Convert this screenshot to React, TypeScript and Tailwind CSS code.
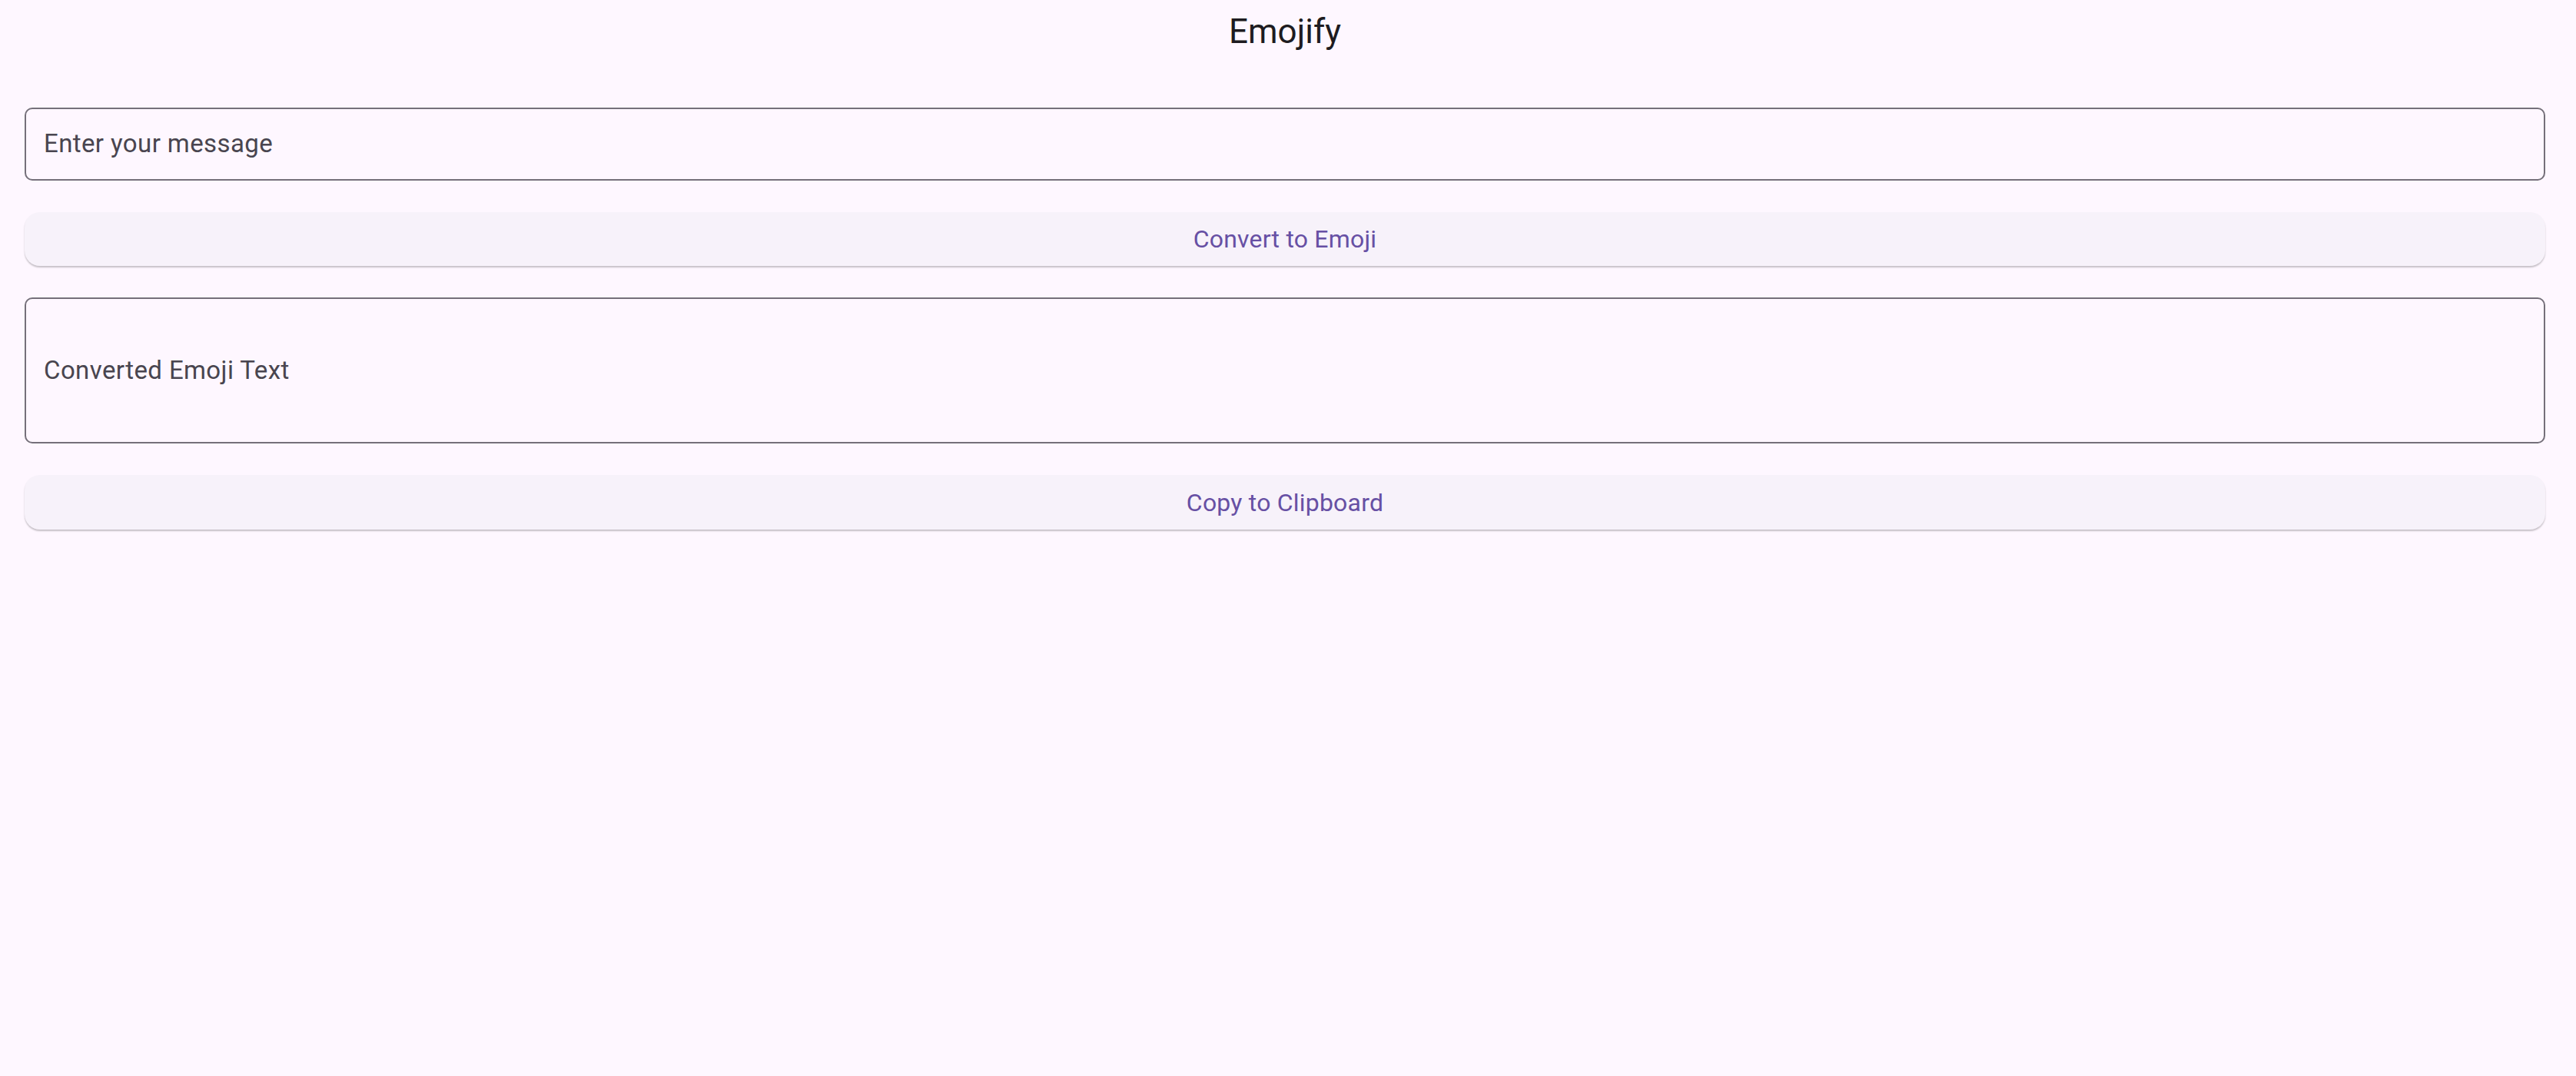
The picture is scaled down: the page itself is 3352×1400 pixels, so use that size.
import { useState } from "react";

const font = { fontFamily: "Roboto, 'Noto Sans', sans-serif" };

export default function App() {
  const [message, setMessage] = useState("");
  const [converted, setConverted] = useState("");

  const handleConvert = () => {
    setConverted(message);
  };

  const handleCopy = () => {
    navigator.clipboard?.writeText(converted).catch(() => {});
  };

  return (
    <div className="min-h-[1400px] w-[3352px] bg-[#FEF7FF]" style={font}>
      <div className="w-[3344px]">
        <header className="flex h-[82px] items-center justify-center">
          <h1 className="text-[44px] font-normal leading-[52px] text-[#1D1B20]">Emojify</h1>
        </header>

        <main className="mt-[58px] flex flex-col gap-[41px] px-[32px]">
          <input
            type="text"
            className="h-[95px] w-full rounded-[10px] border-2 border-[#75707A] bg-transparent px-[23px] pb-[2px] text-[33px] tracking-[0.4px] text-[#1D1B20] outline-none placeholder:text-[#49454F]"
            placeholder="Enter your message"
            value={message}
            onChange={(e) => setMessage(e.target.value)}
          />

          <button
            className="h-[70px] w-full rounded-[20px] bg-[#F7F2FA] text-[32px] font-normal tracking-[0.2px] text-[#6750A4] shadow-[0_2px_2px_rgba(0,0,0,0.22)]"
            onClick={handleConvert}
          >
            Convert to Emoji
          </button>

          <div className="flex h-[190px] items-center rounded-[10px] border-2 border-[#75707A] px-[23px] text-[33px] tracking-[0.4px] text-[#49454F]">
            {converted || "Converted Emoji Text"}
          </div>

          <button
            className="h-[71px] w-full rounded-[20px] bg-[#F7F2FA] text-[32px] font-normal tracking-[0.2px] text-[#6750A4] shadow-[0_2px_2px_rgba(0,0,0,0.22)]"
            onClick={handleCopy}
          >
            Copy to Clipboard
          </button>
        </main>
      </div>
    </div>
  );
}
